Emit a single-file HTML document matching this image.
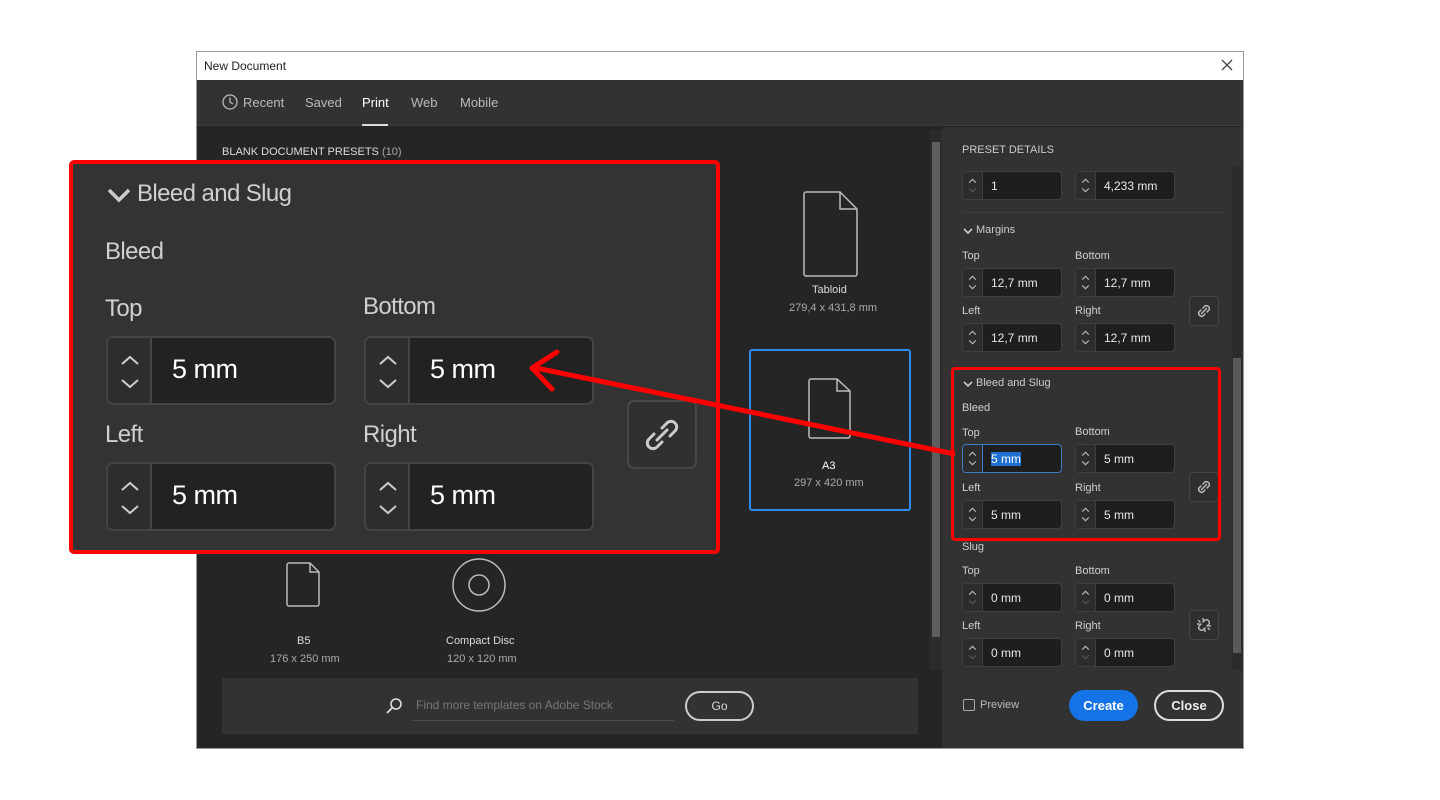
<!DOCTYPE html>
<html><head><meta charset="utf-8"><style>
*{box-sizing:border-box;margin:0;padding:0}
body{width:1440px;height:800px;background:#fff;position:relative;overflow:hidden;font-family:"Liberation Sans",sans-serif;}
.a{position:absolute}
.t{color:#cfcfcf;font-size:11px;white-space:nowrap}
.inp{position:absolute;width:100px;height:29px;border:1px solid #3f3f3f;border-radius:4px;background:#1e1e1e;overflow:hidden}
.inp .s{position:absolute;left:0;top:0;width:20px;height:100%;background:#2c2c2c;border-right:1px solid #3f3f3f}
.inp .v{position:absolute;left:28px;top:7px;color:#e8e8e8;font-size:12px}
.lk{position:absolute;width:30px;height:30px;border:1px solid #444;border-radius:4px;background:#2f2f2f}
.big{position:absolute;width:230px;height:69px;border:2px solid #444;border-radius:7px;background:#222;overflow:hidden}
.big .s{position:absolute;left:0;top:0;width:44px;height:100%;background:#2d2d2d;border-right:2px solid #444}
.big .v{position:absolute;left:64px;top:16px;color:#fff;font-size:27px;letter-spacing:-0.5px}
.bl{position:absolute;color:#cfcfcf;font-size:24px;letter-spacing:-0.6px}
</style></head><body>
<svg width="0" height="0" style="position:absolute"><defs>
<symbol id="st" viewBox="0 0 20 28"><path d="M6.5 11l3.5-3.5 3.5 3.5" fill="none" stroke="#bbb" stroke-width="1.2"/><path d="M6.5 17l3.5 3.5 3.5-3.5" fill="none" stroke="#bbb" stroke-width="1.2"/></symbol>
<symbol id="sd" viewBox="0 0 20 28"><path d="M6.5 11l3.5-3.5 3.5 3.5" fill="none" stroke="#bbb" stroke-width="1.2"/><path d="M6.5 17l3.5 3.5 3.5-3.5" fill="none" stroke="#555" stroke-width="1.2"/></symbol>
<symbol id="lnk" viewBox="0 0 28 28"><path d="M11.5 16.5l5-5M11 13l-2 2a3 3 0 0 0 4 4l2-2M17 15l2-2a3 3 0 0 0-4-4l-2 2" fill="none" stroke="#bbb" stroke-width="1.5" stroke-linecap="round"/></symbol>
</defs></svg>
<!-- dialog -->
<div class="a" style="left:196px;top:51px;width:1048px;height:698px;border:1px solid #999;background:#252525"></div>
<div class="a" style="left:197px;top:52px;width:1046px;height:28px;background:#fff"></div>
<div class="a" style="left:204px;top:59px;font-size:12px;color:#222">New Document</div>
<svg class="a" style="left:1221px;top:59px" width="12" height="12"><path d="M1 1L11 11M11 1L1 11" stroke="#444" stroke-width="1.3"/></svg>
<div class="a" style="left:197px;top:80px;width:1046px;height:46px;background:#323232;border-bottom:1px solid #3a3a3a"></div>
<svg class="a" style="left:222px;top:94px" width="16" height="16"><circle cx="8" cy="8" r="7" fill="none" stroke="#bbb" stroke-width="1.3"/><path d="M8 3.5V8l3 2" fill="none" stroke="#bbb" stroke-width="1.3"/></svg>
<div class="a t" style="left:243px;top:95px;font-size:13px;color:#bbb">Recent</div>
<div class="a t" style="left:305px;top:95px;font-size:13px;color:#bbb">Saved</div>
<div class="a t" style="left:362px;top:95px;font-size:13px;color:#fff">Print</div>
<div class="a" style="left:362px;top:124px;width:26px;height:2px;background:#ddd"></div>
<div class="a t" style="left:411px;top:95px;font-size:13px;color:#bbb">Web</div>
<div class="a t" style="left:460px;top:95px;font-size:13px;color:#bbb">Mobile</div>
<div class="a t" style="left:222px;top:146px;color:#ddd">BLANK DOCUMENT PRESETS <span style="color:#aaa">(10)</span></div>
<div class="a" style="left:930px;top:130px;width:12px;height:540px;background:#2b2b2b"></div>
<div class="a" style="left:932px;top:142px;width:8px;height:495px;background:#5e5e5e"></div>
<!-- presets -->
<svg class="a" style="left:800px;top:190px" width="60" height="90"><path d="M6 2H40L57 19V84a2 2 0 0 1-2 2H6a2 2 0 0 1-2-2V4a2 2 0 0 1 2-2Z M40 2V19H57" fill="none" stroke="#bbb" stroke-width="1.5"/></svg>
<div class="a t" style="left:812px;top:284px;color:#ddd">Tabloid</div>
<div class="a t" style="left:789px;top:302px;color:#aaa">279,4 x 431,8 mm</div>
<div class="a" style="left:749px;top:349px;width:162px;height:162px;border:2px solid #2d8ceb;border-radius:3px"></div>
<svg class="a" style="left:808px;top:378px" width="44" height="62"><path d="M3 1H29L42 13V58a2 2 0 0 1-2 2H3a2 2 0 0 1-2-2V3a2 2 0 0 1 2-2Z M29 1V13H42" fill="none" stroke="#bbb" stroke-width="1.5"/></svg>
<div class="a t" style="left:822px;top:460px;color:#fff">A3</div>
<div class="a t" style="left:794px;top:477px;color:#aaa">297 x 420 mm</div>
<svg class="a" style="left:286px;top:562px" width="36" height="46"><path d="M3 1H24L33 10V42a2 2 0 0 1-2 2H3a2 2 0 0 1-2-2V3a2 2 0 0 1 2-2Z M24 1V10H33" fill="none" stroke="#bbb" stroke-width="1.5"/></svg>
<div class="a t" style="left:297px;top:635px;color:#ddd">B5</div>
<div class="a t" style="left:270px;top:653px;color:#aaa">176 x 250 mm</div>
<svg class="a" style="left:451px;top:557px" width="56" height="56"><circle cx="28" cy="28" r="26" fill="none" stroke="#bbb" stroke-width="1.5"/><circle cx="28" cy="28" r="10" fill="none" stroke="#bbb" stroke-width="1.5"/></svg>
<div class="a t" style="left:446px;top:635px;color:#ddd">Compact Disc</div>
<div class="a t" style="left:447px;top:653px;color:#aaa">120 x 120 mm</div>
<!-- search -->
<div class="a" style="left:222px;top:678px;width:696px;height:56px;background:#323232"></div>
<svg class="a" style="left:385px;top:697px" width="18" height="18"><circle cx="11" cy="7" r="5" fill="none" stroke="#ddd" stroke-width="1.6"/><path d="M7.5 10.5L2 16" stroke="#ddd" stroke-width="1.8"/></svg>
<div class="a t" style="left:416px;top:698px;color:#777;font-size:12px">Find more templates on Adobe Stock</div>
<div class="a" style="left:412px;top:720px;width:262px;height:1px;background:#4a4a4a"></div>
<div class="a" style="left:685px;top:691px;width:69px;height:30px;border:2px solid #ccc;border-radius:15px;color:#ddd;font-size:12px;text-align:center;line-height:26px">Go</div>
<!-- right panel -->
<div class="a" style="left:942px;top:127px;width:301px;height:621px;background:#323232"></div>
<div class="a" style="left:1232px;top:166px;width:10px;height:504px;background:#2b2b2b"></div>
<div class="a" style="left:1233px;top:358px;width:8px;height:295px;background:#5a5a5a"></div>
<div class="a t" style="left:962px;top:144px;color:#ccc">PRESET DETAILS</div>
<div class="inp" style="left:962px;top:171px"><svg class="s" viewBox="0 0 20 28"><use href="#sd"/></svg><div class="v">1</div></div>
<div class="inp" style="left:1075px;top:171px"><svg class="s" viewBox="0 0 20 28"><use href="#st"/></svg><div class="v">4,233 mm</div></div>
<div class="a" style="left:962px;top:212px;width:262px;height:1px;background:#3c3c3c"></div>
<svg class="a" style="left:963px;top:227px" width="10" height="8"><path d="M1 2l4 4 4-4" fill="none" stroke="#ccc" stroke-width="1.6"/></svg>
<div class="a t" style="left:976px;top:224px;color:#ccc">Margins</div>
<div class="a t" style="left:962px;top:250px">Top</div><div class="a t" style="left:1075px;top:250px">Bottom</div>
<div class="inp" style="left:962px;top:268px"><svg class="s" viewBox="0 0 20 28"><use href="#st"/></svg><div class="v">12,7 mm</div></div>
<div class="inp" style="left:1075px;top:268px"><svg class="s" viewBox="0 0 20 28"><use href="#st"/></svg><div class="v">12,7 mm</div></div>
<div class="a t" style="left:962px;top:305px">Left</div><div class="a t" style="left:1075px;top:305px">Right</div>
<div class="inp" style="left:962px;top:323px"><svg class="s" viewBox="0 0 20 28"><use href="#st"/></svg><div class="v">12,7 mm</div></div>
<div class="inp" style="left:1075px;top:323px"><svg class="s" viewBox="0 0 20 28"><use href="#st"/></svg><div class="v">12,7 mm</div></div>
<div class="lk" style="left:1189px;top:296px"><svg width="28" height="28"><use href="#lnk"/></svg></div>
<svg class="a" style="left:963px;top:380px" width="10" height="8"><path d="M1 2l4 4 4-4" fill="none" stroke="#ccc" stroke-width="1.6"/></svg>
<div class="a t" style="left:976px;top:377px;color:#ccc">Bleed and Slug</div>
<div class="a t" style="left:962px;top:402px">Bleed</div>
<div class="a t" style="left:962px;top:427px">Top</div><div class="a t" style="left:1075px;top:426px">Bottom</div>
<div class="inp" style="left:962px;top:444px;border-color:#3d7fc7"><svg class="s" viewBox="0 0 20 28" style="border-color:#3d7fc7"><use href="#st"/></svg><div class="v"><span style="background:#1f6fd1;color:#fff">5 mm</span></div></div>
<div class="inp" style="left:1075px;top:444px"><svg class="s" viewBox="0 0 20 28"><use href="#st"/></svg><div class="v">5 mm</div></div>
<div class="a t" style="left:962px;top:482px">Left</div><div class="a t" style="left:1075px;top:482px">Right</div>
<div class="inp" style="left:962px;top:500px"><svg class="s" viewBox="0 0 20 28"><use href="#st"/></svg><div class="v">5 mm</div></div>
<div class="inp" style="left:1075px;top:500px"><svg class="s" viewBox="0 0 20 28"><use href="#st"/></svg><div class="v">5 mm</div></div>
<div class="lk" style="left:1189px;top:472px"><svg width="28" height="28"><use href="#lnk"/></svg></div>
<div class="a t" style="left:962px;top:541px">Slug</div>
<div class="a t" style="left:962px;top:565px">Top</div><div class="a t" style="left:1075px;top:565px">Bottom</div>
<div class="inp" style="left:962px;top:583px"><svg class="s" viewBox="0 0 20 28"><use href="#sd"/></svg><div class="v">0 mm</div></div>
<div class="inp" style="left:1075px;top:583px"><svg class="s" viewBox="0 0 20 28"><use href="#sd"/></svg><div class="v">0 mm</div></div>
<div class="a t" style="left:962px;top:620px">Left</div><div class="a t" style="left:1075px;top:620px">Right</div>
<div class="inp" style="left:962px;top:638px"><svg class="s" viewBox="0 0 20 28"><use href="#sd"/></svg><div class="v">0 mm</div></div>
<div class="inp" style="left:1075px;top:638px"><svg class="s" viewBox="0 0 20 28"><use href="#sd"/></svg><div class="v">0 mm</div></div>
<div class="lk" style="left:1189px;top:610px"><svg width="28" height="28"><path d="M11 13l-2 2a3 3 0 0 0 4 4l2-2M17 15l2-2a3 3 0 0 0-4-4l-2 2M8.5 9.5l1.5 1.5M19.5 18.5l-1.5-1.5M13 7.5v1.5M7.5 13h1.5M15 20.5V19M20.5 15H19" fill="none" stroke="#bbb" stroke-width="1.4" stroke-linecap="round"/></svg></div>
<div class="a" style="left:963px;top:699px;width:12px;height:12px;border:1px solid #aaa;border-radius:2px"></div>
<div class="a t" style="left:980px;top:699px;color:#bbb">Preview</div>
<div class="a" style="left:1069px;top:690px;width:69px;height:31px;background:#1473e6;border-radius:16px;color:#fff;font-size:13px;font-weight:bold;text-align:center;line-height:31px">Create</div>
<div class="a" style="left:1154px;top:690px;width:70px;height:31px;border:2px solid #ddd;border-radius:16px;color:#eee;font-size:13px;font-weight:bold;text-align:center;line-height:27px">Close</div>
<div class="a" style="left:951px;top:367px;width:270px;height:174px;border:3px solid #f00;border-radius:4px"></div>
<!-- magnified panel -->
<div class="a" style="left:69px;top:160px;width:651px;height:394px;background:#333;border:4px solid #f00;border-radius:5px"></div>
<svg class="a" style="left:106px;top:186px" width="26" height="20"><path d="M3 4l10 10 10-10" fill="none" stroke="#ccc" stroke-width="3.5"/></svg>
<div class="bl" style="left:137px;top:180px">Bleed and Slug</div>
<div class="bl" style="left:105px;top:238px">Bleed</div>
<div class="bl" style="left:105px;top:295px">Top</div>
<div class="bl" style="left:363px;top:293px">Bottom</div>
<div class="bl" style="left:105px;top:421px">Left</div>
<div class="bl" style="left:363px;top:421px">Right</div>
<div class="big" style="left:106px;top:336px"><div class="s"><svg width="44" height="65"><path d="M14 26l8-7 8 7M14 42l8 7 8-7" fill="none" stroke="#ccc" stroke-width="2"/></svg></div><div class="v">5 mm</div></div>
<div class="big" style="left:364px;top:336px"><div class="s"><svg width="44" height="65"><path d="M14 26l8-7 8 7M14 42l8 7 8-7" fill="none" stroke="#ccc" stroke-width="2"/></svg></div><div class="v">5 mm</div></div>
<div class="big" style="left:106px;top:462px"><div class="s"><svg width="44" height="65"><path d="M14 26l8-7 8 7M14 42l8 7 8-7" fill="none" stroke="#ccc" stroke-width="2"/></svg></div><div class="v">5 mm</div></div>
<div class="big" style="left:364px;top:462px"><div class="s"><svg width="44" height="65"><path d="M14 26l8-7 8 7M14 42l8 7 8-7" fill="none" stroke="#ccc" stroke-width="2"/></svg></div><div class="v">5 mm</div></div>
<div class="a" style="left:627px;top:400px;width:70px;height:69px;border:2px solid #474747;border-radius:7px;background:#303030"><svg width="66" height="65"><path d="M28 38l10-10M25 32l-5 5a5.5 5.5 0 0 0 8 8l5-5M41 34l5-5a5.5 5.5 0 0 0-8-8l-5 5" fill="none" stroke="#ccc" stroke-width="3" stroke-linecap="round"/></svg></div>
<svg class="a" style="left:0;top:0" width="1440" height="800"><path d="M955 454L536 368" stroke="#f00" stroke-width="5" fill="none"/><path d="M557 352L532 368L552 389" stroke="#f00" stroke-width="5" fill="none" stroke-linecap="round" stroke-linejoin="round"/></svg>
</body></html>
